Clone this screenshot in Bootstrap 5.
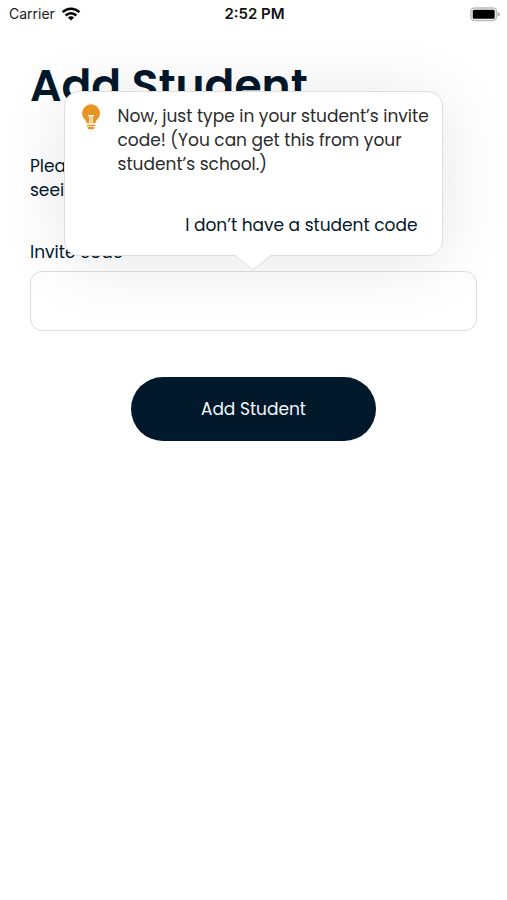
<!DOCTYPE html>
<html lang="en">
<head>
<meta charset="utf-8">
<meta name="viewport" content="width=device-width, initial-scale=1">
<title>Add Student</title>
<link href="https://cdn.jsdelivr.net/npm/bootstrap@5.3.0/dist/css/bootstrap.min.css" rel="stylesheet">
<style>
  :root { --ink: #02182b; --line: #dedede; }
  body { font-family: Poppins, Inter, "Open Sans", sans-serif; font-size: 17px; line-height: 24px; color: var(--ink); background: #fff; }
  .status { height: 28px; padding: 0 7px 0 9px; font-family: Inter, sans-serif; font-size: 14px; line-height: 28px; color: #1a1a1a; }
  .status .clock { font-size: 15px; font-weight: 600; color: #111; }
  .carrier { margin-right: 6px; }
  .page { padding: 30px 30px 0; }
  h1 { font-size: 44px; line-height: 56px; font-weight: 600; margin-bottom: 40px; }
  .intro { margin-bottom: 38px; }
  .code-label { margin-bottom: 7px; }
  .code-input { height: 60px; border: 1px solid var(--line); border-radius: 12px; background: #fff; }
  .tip { bottom: 100%; width: 85%; margin-bottom: 15px; padding: 12px 10px 18px 16px; min-height: 165px; background: #fff; border: 1px solid var(--line); border-radius: 15px; box-shadow: 0 6px 70px rgba(0, 0, 0, .1); z-index: 2; }
  .tip-text { color: #2b2b2b; }
  .tip-icon { margin-right: 17px; }
  .tip-arrow { top: 100%; margin-top: -1px; }
  .tip-link { color: var(--ink); margin-right: 15px; }
  .submit { width: 55%; height: 64px; background: var(--ink); color: #f2f6fa; font-size: 17px; margin-top: 46px; padding-top: 8px; }
  .submit:hover { background: #0c2b47; color: #fff; }
</style>
</head>
<body>
<header class="status row g-0">
  <div class="col d-flex align-items-center">
    <span class="carrier">Carrier</span>
    <svg width="20" height="14" viewBox="0 0 20 14" aria-hidden="true"><g fill="none" stroke="#000" stroke-width="2.5"><path d="M1.600 5.200a12 12 0 0 1 16.800 0"/><path d="M4.700 8.500a7.600 7.600 0 0 1 10.600 0"/></g><path d="M10 13.600 6.900 10.600a4.400 4.400 0 0 1 6.200 0z"/></svg>
  </div>
  <div class="col-auto clock">2:52 PM</div>
  <div class="col d-flex align-items-center justify-content-end">
    <svg width="30" height="15" viewBox="0 0 30 15" aria-hidden="true"><rect x=".9" y=".9" width="25.600" height="12.600" rx="3.800" fill="#fff" stroke="#bcbcbc" stroke-width="1.500"/><rect x="2.700" y="2.700" width="22" height="9" rx="1.500" fill="#000"/><path d="M27.800 5v4.500q2-.6 2-2.250T27.800 5z" fill="#aaa"/></svg>
  </div>
</header>

<main class="page">
  <h1>Add Student</h1>
  <p class="intro">Please<br>seeing</p>
  <form>
    <label class="code-label d-block" for="code">Invite code</label>
    <div class="position-relative">
      <input id="code" class="code-input form-control" type="text" autocomplete="off">
      <div class="tip position-absolute start-50 translate-middle-x d-flex flex-column justify-content-between" role="tooltip">
        <div class="d-flex align-items-start">
          <svg class="tip-icon flex-shrink-0" width="20" height="26" viewBox="0 0 20 26" aria-hidden="true"><path fill="#e8941f" d="M10 .3a8.800 8.800 0 0 0-8.900 8.900c0 3.200 1.600 5.200 3.200 6.900.8.900 1.100 1.900 1.300 3.200h8.800c.2-1.300.5-2.300 1.300-3.200 1.600-1.700 3.200-3.700 3.200-6.900A8.800 8.800 0 0 0 10 .3zM5.800 20.700h8.400v1.500H5.800zM6.500 22.900h7v1l-1 1.300h-5l-1-1.300z"/><path d="M7 11.700h6M8.900 11.700v7.800M11.100 11.700v7.800" fill="none" stroke="#fff" stroke-width="1.200"/></svg>
          <div class="tip-text">Now, just type in your student’s invite code! (You can get this from your student’s school.)</div>
        </div>
        <a class="tip-link align-self-end text-decoration-none" href="#">I don’t have a student code</a>
        <svg class="tip-arrow position-absolute start-50 translate-middle-x" width="36" height="17" viewBox="0 0 36 17" aria-hidden="true"><path d="M0 0h36v1L18 16 0 1z" fill="#fff"/><path d="M0 1.500 18 16 36 1.500" fill="none" stroke="#dedede"/></svg>
      </div>
    </div>
    <button class="submit btn rounded-pill d-block mx-auto" type="button">Add Student</button>
  </form>
</main>
<script src="https://cdn.jsdelivr.net/npm/bootstrap@5.3.0/dist/js/bootstrap.bundle.min.js"></script>
</body>
</html>
